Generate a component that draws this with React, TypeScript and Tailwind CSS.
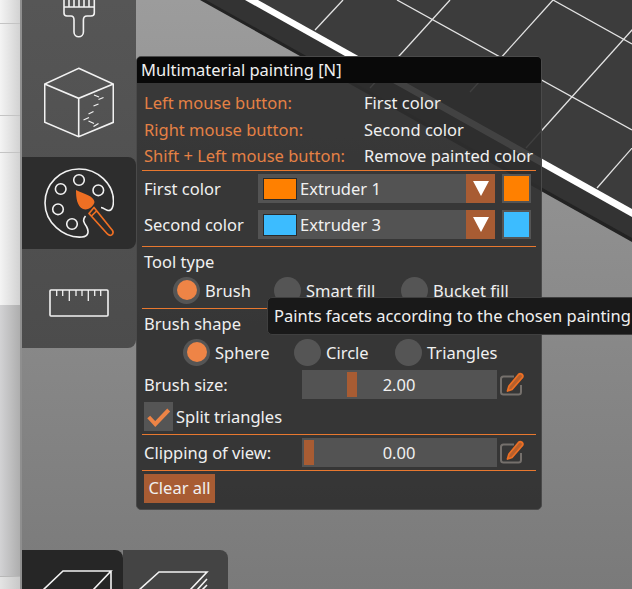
import { type ReactNode } from "react"

// Small separator used between the groups of the gizmo panel
function Separator({ className }: { className: string }) {
  return <div className={`mx-[5px] h-px bg-[#e8782f] ${className}`} />
}

function Hint({ label, value, className }: { label: string; value: string; className: string }) {
  return (
    <div className={`flex items-center pl-[7px] ${className}`}>
      <span className="w-[220px] text-[#e58145]">{label}</span>
      <span>{value}</span>
    </div>
  )
}

function ColorRow({ label, color, extruder, className }: { label: string; color: string; extruder: string; className: string }) {
  return (
    <div className={`flex h-[29px] items-center pl-[7px] ${className}`}>
      <span className="w-[114px] pt-[2px]">{label}</span>
      <div className="flex h-[29px] w-[237px] items-center bg-[#535353] pl-[5px]">
        <div className="h-[22px] w-[34px] border border-[#2a2a2a]" style={{ backgroundColor: color }} />
        <span className="ml-[3px] flex-1 pt-[2px]">{extruder}</span>
        <div className="flex h-[29px] w-[29px] items-center justify-center bg-[#a85c33]">
          <svg width="16" height="15" viewBox="0 0 16 15">
            <path d="M0 0H16L8 15Z" fill="#ffffff" />
          </svg>
        </div>
      </div>
      <div className="ml-[7px] h-[29px] w-[29px] border-2 border-[#555555]" style={{ backgroundColor: color }} />
    </div>
  )
}

function Radio({ label, checked, className }: { label: string; checked?: boolean; className: string }) {
  return (
    <div className={`flex items-center ${className}`}>
      <div className="flex h-[27px] w-[27px] items-center justify-center rounded-full bg-[#555555]">
        {checked && <div className="h-[20px] w-[20px] rounded-full bg-[#ee8446]" />}
      </div>
      <span className="ml-[5px] pt-[2px]">{label}</span>
    </div>
  )
}

function EditIcon() {
  return (
    <svg width="25" height="25" viewBox="500 372 25 25" className="ml-[3px]">
      <path d="M514 376.5H503.5Q501 376.5 501 379V392Q501 394.5 503.5 394.5H518.5Q521 394.5 521 392V385" fill="none" stroke="#75706c" strokeWidth="2" />
      <path d="M518.5 374.5Q520 373 521.5 374L522.5 375Q523.5 376.5 522 378L512 389.5L507.5 391L509 386Z" fill="#b5602d" stroke="#ec6f24" strokeWidth="1.8" strokeLinejoin="round" />
    </svg>
  )
}

function SliderRow({ label, value, thumb, className }: { label: string; value: string; thumb: string; className: string }) {
  return (
    <div className={`flex h-[29px] items-center pl-[7px] ${className}`}>
      <span className="w-[158px] pt-[2px]">{label}</span>
      <div className="relative flex h-[29px] w-[195px] items-center justify-center bg-[#535353] pr-[1px]">
        <div className={`absolute top-[2px] h-[25px] w-[10px] bg-[#a85c33] ${thumb}`} />
        <span className="relative pt-[2px]">{value}</span>
      </div>
      <EditIcon />
    </div>
  )
}

function ToolItem({ children, height, active }: { children: ReactNode; height: string; active?: boolean }) {
  return (
    <div className={`flex shrink-0 justify-center overflow-hidden ${height} ${active ? "rounded-r-lg bg-[#2d2d2d]" : ""}`}>
      {children}
    </div>
  )
}

const iconStroke = { fill: "none", stroke: "#f2f2f2", strokeWidth: 1.6 }

export default function App() {
  return (
    <div className="relative h-[589px] w-[632px] overflow-hidden bg-gradient-to-b from-[#9c9c9c] to-[#7a7a7a] font-['Noto_Sans',sans-serif] text-[16.5px] text-[#f0f0f0]">
      {/* print bed behind everything */}
      <svg className="absolute inset-0" width="632" height="589" viewBox="0 0 632 589">
        <polygon points="200,0 632,0 632,242" fill="#232323" />
        <polygon points="206,0 632,0 632,238" fill="#333333" />
        <polygon points="245,0 632,0 632,217" fill="#ffffff" />
        <polygon points="258,0 632,0 632,209" fill="#3c3c3c" />
        <g stroke="#e4e4e4" strokeWidth="1.3" fill="none">
          <path d="M397 0L632 130" />
          <path d="M553 0L632 44" />
          <path d="M343 0L315 30" />
          <path d="M450 0L370 88" />
          <path d="M553 0L470 92" />
          <path d="M659 0L526 148" />
          <path d="M640 139L597 188" />
        </g>
      </svg>

      {/* window behind the viewport */}
      <div className="absolute left-0 top-0 flex h-full w-[22px] flex-col border-r-2 border-[#8f8f8f]">
        <div className="h-[305px] bg-gradient-to-r from-[#f4f4f4] to-[#d2d2d2]">
          <div className="h-[24px] border-b border-[#c4c4c4]" />
          <div className="h-[92px] border-b border-[#c4c4c4]" />
          <div className="h-[37px] border-b border-[#c4c4c4]" />
        </div>
        <div className="flex-1 bg-gradient-to-r from-[#d2d2d4] to-[#aeaeae]" />
        <div className="h-[13px] border-t border-[#b8b8b8] bg-gradient-to-r from-[#e4e4e4] to-[#c8c8c8]" />
      </div>

      {/* left toolbar */}
      <div className="absolute left-[22px] top-0 flex h-[348px] w-[114px] flex-col rounded-br-lg bg-gradient-to-b from-[#565656] to-[#4c4c4c]">
        <ToolItem height="h-[65px]">
          <svg width="70" height="65" viewBox="44 0 70 65">
            <path d="M64 -2V13Q64 16 67 16H71Q74 16 74 20V32A4.7 4.7 0 0 0 83.4 32V20Q83.4 16 87 16H91Q94.3 16 94.3 13V-2M64 7H94.3M69 0V7M74 0V7M79 0V7M84 0V7M89 0V7" {...iconStroke} />
          </svg>
        </ToolItem>
        <ToolItem height="h-[92px]">
          <svg width="70" height="92" viewBox="44 65 70 92">
            <path d="M78.7 68.3L113.3 84V122.3L78.7 136.7L44.7 122.3V84ZM44.7 84L78.7 98.3L113.3 84M78.7 98.3V136.7" {...iconStroke} />
            <path d="M94 95L99 97M98.5 99.5L103.5 97.5M93.5 106L98.5 104M88.5 114L93.5 111.5M83.5 120L89 117.5M88.5 121L94 123.5M93.5 126.5L98.5 123.5" {...iconStroke} strokeWidth="1.2" />
          </svg>
        </ToolItem>
        <ToolItem height="h-[92px]" active>
          <svg width="70" height="92" viewBox="0 -11 70 92">
            <path d="M41.5 48C38 52 40 55 42.5 58.5C45 63 45 68.5 38 69C19 70.5 1 54 1 35C1 16 16 1 35 1C54 1 69.5 16 69.5 33C69.5 38 68 43 64 42.5C61.5 42 60 40 57 39.5" {...iconStroke} />
            <circle cx="35" cy="12" r="5.3" {...iconStroke} />
            <circle cx="16.7" cy="21" r="5.3" {...iconStroke} />
            <circle cx="54.3" cy="22.3" r="5.3" {...iconStroke} />
            <circle cx="14" cy="41.3" r="5.3" {...iconStroke} />
            <circle cx="28" cy="56" r="5.3" {...iconStroke} />
            <path d="M32 22C40 26 50 28 50.5 34C50 38 44 43 39 41C33 38 32 30 32 22Z" fill="#ee6f23" />
            <path d="M50 39.5L68.5 62.5Q70 65.5 67.5 67Q65 68 63 65.5L45 45.5ZM47.5 48L52.5 43" fill="none" stroke="#ee6f23" strokeWidth="1.7" strokeLinejoin="round" />
          </svg>
        </ToolItem>
        <ToolItem height="h-[92px]">
          <svg width="70" height="92" viewBox="44 249 70 92">
            <rect x="50" y="290" width="58" height="26" rx="1" {...iconStroke} />
            <path d="M56.7 290V296M62.7 290V296M69.3 290V301M76 290V296M82 290V296M88.3 290V301M94.7 290V296M100.7 290V296" {...iconStroke} strokeWidth="1.3" />
          </svg>
        </ToolItem>
      </div>

      {/* bottom view tabs */}
      <div className="absolute bottom-0 left-[22px] flex h-[39px] items-end">
        <div className="h-[39px] w-[101px] rounded-tr-lg bg-[#262626]">
          <svg width="101" height="39" viewBox="22 550 101 39">
            <path d="M63 571H111L93 590H43ZM111 571V590" {...iconStroke} />
          </svg>
        </div>
        <div className="h-[39px] w-[105px] rounded-tr-lg bg-[#444444]">
          <svg width="105" height="39" viewBox="123 550 105 39">
            <path d="M159 572H207L190 590H139ZM207 579L197 590M207 585L202 590" {...iconStroke} />
          </svg>
        </div>
      </div>

      {/* gizmo panel */}
      <div className="absolute left-[136px] top-[56px] h-[454px] w-[406px] overflow-hidden rounded-[5px] border border-[#4a4a4a] bg-[#2e2e2e]/90">
        <div className="flex h-[26px] items-center bg-[#090909] pl-[4px]">Multimaterial painting [N]</div>
        <Hint label="Left mouse button:" value="First color" className="mt-[7px] h-[27px]" />
        <Hint label="Right mouse button:" value="Second color" className="h-[26px]" />
        <Hint label="Shift + Left mouse button:" value="Remove painted color" className="h-[27px]" />
        <Separator className="" />
        <ColorRow label="First color" color="#ff8000" extruder="Extruder 1" className="mt-[3px]" />
        <ColorRow label="Second color" color="#3cbcff" extruder="Extruder 3" className="mt-[7px]" />
        <Separator className="mt-[7px]" />
        <div className="mt-[4px] flex h-[22px] items-center pl-[7px]">Tool type</div>
        <div className="mt-[3px] flex h-[28px] pl-[36px]">
          <Radio label="Brush" checked className="w-[101px]" />
          <Radio label="Smart fill" className="w-[127px]" />
          <Radio label="Bucket fill" className="" />
        </div>
        <Separator className="mt-[4px]" />
        <div className="mt-[4px] flex h-[22px] items-center pl-[7px]">Brush shape</div>
        <div className="mt-[3px] flex h-[28px] pl-[46px]">
          <Radio label="Sphere" checked className="w-[111px]" />
          <Radio label="Circle" className="w-[101px]" />
          <Radio label="Triangles" className="" />
        </div>
        <SliderRow label="Brush size:" value="2.00" thumb="left-[45px]" className="mt-[4px]" />
        <div className="mt-[3px] flex h-[29px] items-center pl-[7px]">
          <div className="flex h-[29px] w-[29px] items-center justify-center bg-[#555555]">
            <svg width="29" height="29" viewBox="144 402 29 29">
              <path d="M148.7 417L155.3 424L168.7 410" fill="none" stroke="#ee8446" strokeWidth="4" />
            </svg>
          </div>
          <span className="ml-[3px] pt-[2px]">Split triangles</span>
        </div>
        <Separator className="mt-[3px]" />
        <SliderRow label="Clipping of view:" value="0.00" thumb="left-[2px]" className="mt-[3px]" />
        <Separator className="mt-[3px]" />
        <div className="ml-[7px] mt-[3px] flex h-[29px] w-[71px] items-center justify-center bg-[#a85c33]">Clear all</div>
      </div>

      {/* hover tooltip, runs past the window edge */}
      <div className="absolute left-[267px] top-[297px] flex h-[38px] w-[460px] items-center rounded-[5px] border border-[#3f3f3f] bg-[#191919] pl-[6px] whitespace-nowrap">
        Paints facets according to the chosen painting
      </div>
    </div>
  )
}
